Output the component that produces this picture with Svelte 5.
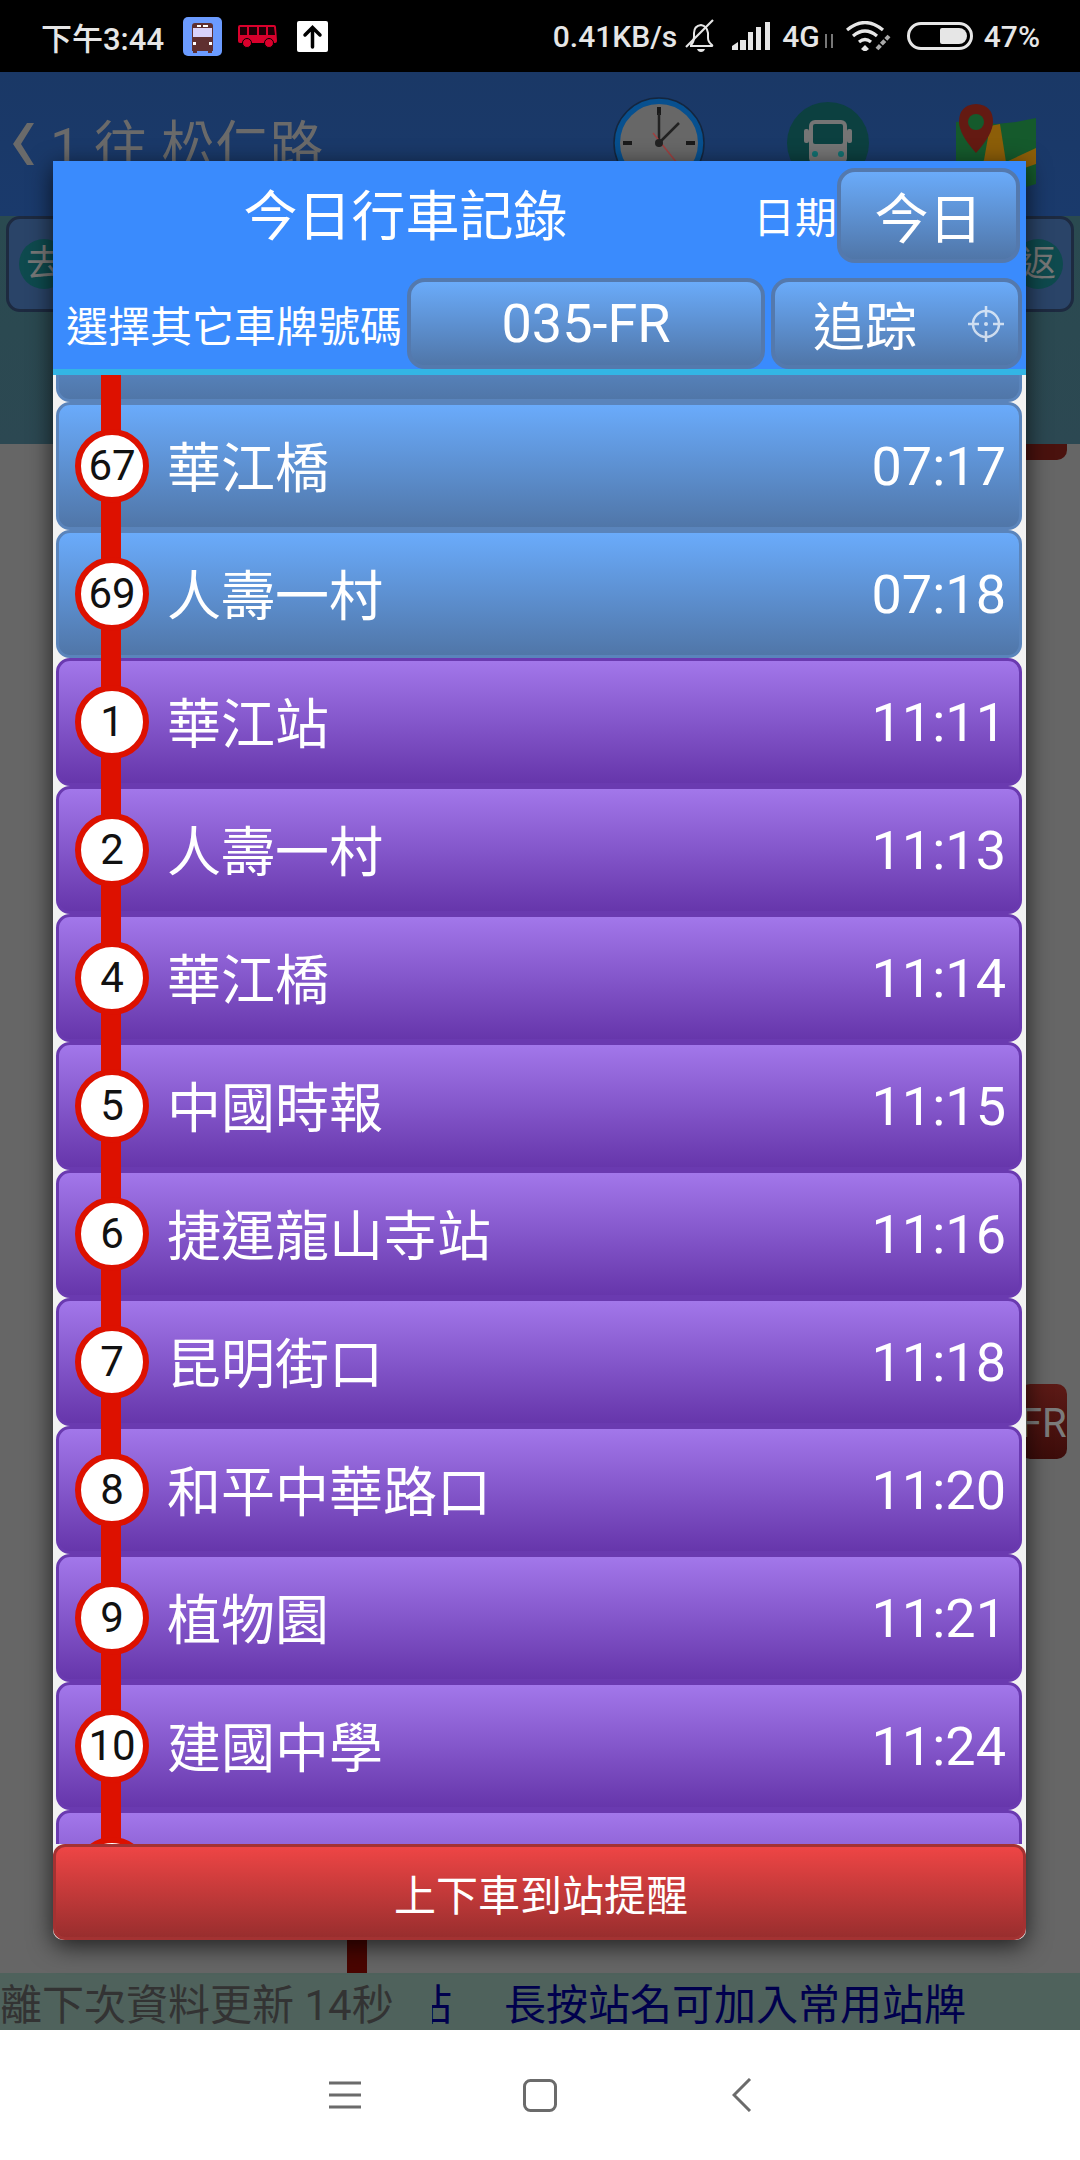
<script>
  const stations = [
    { no: 67, name: '華江橋', time: '07:17', kind: 'blue' },
    { no: 69, name: '人壽一村', time: '07:18', kind: 'blue' },
    { no: 1, name: '華江站', time: '11:11', kind: 'purple' },
    { no: 2, name: '人壽一村', time: '11:13', kind: 'purple' },
    { no: 4, name: '華江橋', time: '11:14', kind: 'purple' },
    { no: 5, name: '中國時報', time: '11:15', kind: 'purple' },
    { no: 6, name: '捷運龍山寺站', time: '11:16', kind: 'purple' },
    { no: 7, name: '昆明街口', time: '11:18', kind: 'purple' },
    { no: 8, name: '和平中華路口', time: '11:20', kind: 'purple' },
    { no: 9, name: '植物園', time: '11:21', kind: 'purple' },
    { no: 10, name: '建國中學', time: '11:24', kind: 'purple' }
  ];
</script>

<div class="screen">
  <header class="status">
    <div class="status-left">
      <span class="clock-text">下午3:44</span>
      <svg class="app-icon" width="39" height="39" viewBox="0 0 39 39">
        <rect width="39" height="39" rx="5" fill="#6b9bff" />
        <path d="M9 9q0-3 3-3h15q3 0 3 3v25H9z" fill="#5f2f30" />
        <path d="M10 11h19v9H10z" fill="#d8d2fb" />
        <rect x="14" y="8" width="4" height="2" fill="#fff" />
        <rect x="20" y="8" width="5" height="2" fill="#fff" />
        <rect x="10" y="25" width="3" height="3" fill="#fff" />
        <rect x="26" y="25" width="3" height="3" fill="#fff" />
        <rect x="10" y="33" width="4" height="3" fill="#5f2f30" />
        <rect x="25" y="33" width="4" height="3" fill="#5f2f30" />
      </svg>
      <svg class="red-bus" width="39" height="23" viewBox="0 0 39 23">
        <path d="M2 0h34q2 0 2 2l1 14q0 2-2 2H2q-2 0-2-2V2q0-2 2-2z" fill="#d9002c" />
        <path d="M2 2h7v8H2zM11 2h8v8h-8zM21 2h7v8h-7zM30 2h6l1 8h-7z" fill="#1a0006" />
        <circle cx="9" cy="18" r="4.500" fill="#d9002c" stroke="#000" stroke-width="1" />
        <circle cx="31" cy="18" r="4.500" fill="#d9002c" stroke="#000" stroke-width="1" />
      </svg>
      <svg class="up-icon" width="31" height="31" viewBox="0 0 31 31">
        <rect width="31" height="31" rx="2" fill="#fff" />
        <path d="M15.500 26V7M8 14l7.500-7.500L23 14" fill="none" stroke="#000" stroke-width="3.500" stroke-linecap="round" />
      </svg>
    </div>
    <div class="status-right">
      <span class="speed">0.41KB/s</span>
      <svg class="bell" width="32" height="34" viewBox="0 0 32 34">
        <path d="M6 26q3-3 3-8v-4q0-7 7-8 6 1 7 8v5q0 4 4 7 1 1-1 1H6z" fill="none" stroke="#e6e6e6" stroke-width="2" />
        <path d="M1 28L28 1" stroke="#e6e6e6" stroke-width="2.200" />
        <path d="M12 30h8q-1 3-4 3t-4-3z" fill="#e6e6e6" />
      </svg>
      <svg class="signal" width="38" height="28" viewBox="0 0 38 28">
        <path d="M0 24l6-4v8H0zM8 18h6v10H8zM16 10h5v18h-5zM24 5h5v23h-5zM33 0h5v28h-5z" fill="#e6e6e6" />
      </svg>
      <span class="net">4G</span>
      <svg class="updown" width="12" height="14" viewBox="0 0 12 14">
        <path d="M3 0v14M9 0v14" stroke="#777" stroke-width="2" />
      </svg>
      <svg class="wifi" width="46" height="30" viewBox="0 0 46 30">
        <path d="M1 9q18-15 36 0M7 15q12-10 24 0M13 21q6-5 12 0" fill="none" stroke="#e6e6e6" stroke-width="3.200" />
        <path d="M19 24l4 4-4 3-4-3z" fill="#e6e6e6" />
        <path d="M31 28l12-13" stroke="#aaa" stroke-width="4" stroke-dasharray="5 1.500" />
      </svg>
      <span class="battery"><i></i></span>
      <span class="percent">47%</span>
    </div>
  </header>

  <!-- dimmed page behind the dialog -->
  <section class="appbar">
    <svg class="chevron" width="21" height="42" viewBox="0 0 21 42"><path d="M21 0h-7L0 21l14 21h7L8 21z" fill="#6a6a6a" /></svg>
    <span class="back-title">1 往 松仁路</span>
    <svg class="clock" width="92" height="92" viewBox="0 0 92 92">
      <circle cx="46" cy="46" r="42" fill="#676767" stroke="#07508f" stroke-width="6" />
      <circle cx="46" cy="46" r="45" fill="none" stroke="#14263f" stroke-width="1.500" />
      <path d="M46 10v8M46 74v8M10 46h9M73 46h9" stroke="#1a1a1a" stroke-width="4" />
      <path d="M46 16v30M46 46l20-20" stroke="#222" stroke-width="2.500" />
      <path d="M40 36l24 30" stroke="#a04040" stroke-width="1.500" />
      <circle cx="46" cy="46" r="4" fill="#222" />
    </svg>
    <svg class="busround" width="82" height="82" viewBox="0 0 82 82">
      <circle cx="41" cy="41" r="41" fill="#0c4040" />
      <rect x="22" y="18" width="38" height="44" rx="6" fill="#757575" />
      <rect x="26" y="22" width="30" height="20" rx="2" fill="#0c4040" />
      <rect x="17" y="27" width="5" height="14" rx="2" fill="#757575" />
      <rect x="60" y="27" width="5" height="14" rx="2" fill="#757575" />
      <circle cx="28" cy="52" r="3" fill="#117070" />
      <circle cx="54" cy="52" r="3" fill="#117070" />
    </svg>
    <svg class="map" width="80" height="88" viewBox="0 0 80 88">
      <path d="M0 18l20-2 20 4 20-2 20-4v66l-20 6-20-6-20 6-20-2z" fill="#155a2c" />
      <path d="M34 22l10-2 6 38 30-14v16L12 84l16-28z" fill="#8c5e08" />
      <path d="M20 0q-17 1-17 18 0 12 17 31 17-19 17-31 0-17-17-18z" fill="#641a12" />
      <circle cx="20" cy="18" r="8" fill="#155a2c" />
    </svg>
  </section>
  <section class="tabs">
    <div class="tab"><span class="badge">去</span></div>
    <div class="tab"><span class="badge">返</span></div>
  </section>
  <main class="routepane">
    <div class="tag top"></div>
    <div class="tag plate">FR</div>
    <div class="stub"></div>
  </main>
  <div class="ticker">
    <span class="countdown">離下次資料更新 14秒</span>
    <div class="marquee"><span class="hint tail">站</span><span class="hint">長按站名可加入常用站牌</span></div>
  </div>
  <nav class="navbar">
    <svg width="32" height="28" viewBox="0 0 32 28"><path d="M0 2h32M0 14h32M0 26h32" stroke="#6b6b6b" stroke-width="3" /></svg>
    <svg width="34" height="33" viewBox="0 0 34 33"><rect x="1.500" y="1.500" width="31" height="30" rx="6" fill="none" stroke="#6b6b6b" stroke-width="3" /></svg>
    <svg width="20" height="34" viewBox="0 0 20 34"><path d="M18 1L2 17l16 16" fill="none" stroke="#6b6b6b" stroke-width="3" /></svg>
  </nav>

  <div class="dialog">
    <div class="dlg-head">
      <div class="head-row first">
        <h1>今日行車記錄</h1>
        <span class="date-label">日期</span>
        <button class="btn today">今日</button>
      </div>
      <div class="head-row second">
        <span class="plate-label">選擇其它車牌號碼</span>
        <button class="btn plate-btn">035-FR</button>
        <button class="btn track">
          <span>追踪</span>
          <svg width="38" height="38" viewBox="0 0 38 38">
            <circle cx="19" cy="19" r="13" fill="none" stroke="#fff" stroke-width="2.500" />
            <circle cx="19" cy="19" r="2" fill="#fff" />
            <path d="M19 1v11M19 26v11M1 19h11M26 19h11" stroke="#fff" stroke-width="2.500" />
          </svg>
        </button>
      </div>
    </div>
    <div class="list">
      <div class="rail"></div>
      <div class="row blue spill"></div>
      {#each stations as s (s.no + s.time)}
        <div class="row {s.kind}">
          <span class="stop">{s.no}</span>
          <span class="name">{s.name}</span>
          <span class="time">{s.time}</span>
        </div>
      {/each}
      <div class="row purple">
        <span class="stop"></span>
      </div>
    </div>
    <button class="remind">上下車到站提醒</button>
  </div>
</div>

<style>
:global(body) {
  margin: 0;
  background: #fff;
}
.screen {
  position: relative;
  width: 1080px;
  height: 2160px;
  overflow: hidden;
  display: flex;
  flex-direction: column;
  font-family: Roboto, "Noto Sans CJK TC", sans-serif;
}
button {
  font-family: inherit;
  margin: 0;
}

.status {
  height: 72px;
  flex: none;
  background: #000;
  color: #e6e6e6;
  display: flex;
  justify-content: space-between;
  align-items: center;
  padding: 0 40px 0 41px;
  box-sizing: border-box;
  font-weight: 500;
}
.status-left, .status-right {
  display: flex;
  align-items: center;
}
.clock-text {
  font-size: 31px;
  width: 142px;
  white-space: nowrap;
}
.red-bus { margin-left: 16px; }
.up-icon { margin-left: 20px; }
.speed { font-size: 30px; }
.bell { margin-left: 8px; }
.signal { margin-left: 15px; }
.net { font-size: 30px; margin-left: 12px; }
.updown { margin-left: 3px; margin-top: 10px; }
.wifi { margin-left: 11px; }
.battery {
  margin-left: 15px;
  width: 66px;
  height: 28px;
  box-sizing: border-box;
  border: 3px solid #e6e6e6;
  border-radius: 14px;
  display: flex;
  justify-content: flex-end;
  padding: 3px;
}
.battery i {
  width: 27px;
  background: #e6e6e6;
  border-radius: 2px 8px 8px 2px;
}
.percent { font-size: 30px; margin-left: 11px; }

.appbar {
  height: 144px;
  flex: none;
  background: linear-gradient(#1a3866, #1a3a6c);
  display: flex;
  align-items: flex-start;
}
.chevron {
  margin: 51px 0 0 13px;
}
.back-title {
  color: #6a6a6a;
  font-size: 54px;
  line-height: 60px;
  margin: 46px 0 0 16px;
  width: 563px;
  white-space: nowrap;
}
.clock { margin-top: 25px; }
.busround { margin: 30px 0 0 82px; }
.map { margin: 32px 0 0 87px; }

.tabs {
  height: 228px;
  flex: none;
  box-sizing: border-box;
  background: linear-gradient(#2a4a50, #2c4852);
  display: flex;
  justify-content: space-between;
  padding: 0 6px;
}
.tab {
  width: 100px;
  height: 96px;
  box-sizing: border-box;
  border: 3px solid #1d2a40;
  border-radius: 14px;
  background: #2a4468;
  display: flex;
  align-items: center;
  padding: 0 8px 0 10px;
}
.tab:last-child { justify-content: flex-end; }
.badge {
  width: 50px;
  height: 50px;
  flex: none;
  border-radius: 50%;
  background: #0e4a4e;
  color: #777;
  font-size: 36px;
  line-height: 50px;
  text-align: center;
}

.routepane {
  flex: 1;
  background: #666;
  position: relative;
}
.tag {
  position: absolute;
  left: 1020px;
  width: 47px;
  background: linear-gradient(#5c1a16, #3c0c0a);
  border-radius: 0 0 10px 0;
}
.tag.top {
  top: 0;
  height: 16px;
  background: #4a120e;
}
.tag.plate {
  top: 940px;
  height: 75px;
  border-radius: 10px;
  color: #7b7b7b;
  font-size: 40px;
  line-height: 80px;
  white-space: nowrap;
  overflow: hidden;
}
.stub {
  position: absolute;
  left: 347px;
  bottom: 0;
  width: 20px;
  height: 100px;
  background: #4a0500;
}

.ticker {
  height: 57px;
  flex: none;
  background: #4f625c;
  display: flex;
  align-items: center;
  font-size: 42px;
  white-space: nowrap;
}
.countdown {
  color: #333;
  width: 432px;
  flex: none;
}
.marquee {
  flex: 1;
  overflow: hidden;
  display: flex;
  color: #00004d;
}
.hint.tail {
  margin-left: -22px;
  margin-right: 52px;
}
.navbar {
  height: 130px;
  flex: none;
  background: #fff;
  display: flex;
  align-items: center;
  justify-content: center;
}
.navbar svg:nth-child(1) { margin-right: 162px; }
.navbar svg:nth-child(2) { margin-right: 175px; }

.dialog {
  position: absolute;
  left: 53px;
  top: 161px;
  width: 973px;
  height: 1779px;
  display: flex;
  flex-direction: column;
  background: #f2f2f2;
  border-radius: 0 0 10px 10px;
  box-shadow: 0 6px 24px rgba(0, 0, 0, 0.7);
}
.dlg-head {
  flex: none;
  height: 214px;
  box-sizing: border-box;
  background: #3a8bfd;
  border-bottom: 6px solid #33b5e5;
  color: #fff;
}
.head-row {
  display: flex;
  align-items: center;
}
.head-row.first {
  height: 117px;
  padding-right: 6px;
}
.head-row.first h1 {
  flex: 1;
  margin: -14px 0 0;
  padding-left: 5px;
  text-align: center;
  font-size: 54px;
  font-weight: 400;
}
.date-label {
  font-size: 42px;
  width: 84px;
  flex: none;
  margin-top: -10px;
}
.btn {
  flex: none;
  box-sizing: border-box;
  border: 4px solid #5479ad;
  border-radius: 18px;
  background: linear-gradient(#6aabfa, #5076a8);
  color: #fff;
  padding: 0;
}
.btn.today {
  width: 183px;
  height: 95px;
  font-size: 54px;
  margin-top: -8px;
}
.head-row.second {
  height: 91px;
  padding-left: 13px;
}
.plate-label {
  width: 341px;
  flex: none;
  font-size: 42px;
  white-space: nowrap;
}
.btn.plate-btn {
  width: 358px;
  height: 91px;
  font-size: 54px;
}
.btn.track {
  width: 251px;
  height: 91px;
  margin-left: 6px;
  font-size: 52px;
  display: flex;
  align-items: center;
  justify-content: space-between;
  padding: 0 13px 0 38px;
}
.btn.track svg { opacity: 0.7; }

.list {
  flex: 1;
  min-height: 0;
  overflow: hidden;
  position: relative;
  padding: 0 4px 0 3px;
}
.rail {
  position: absolute;
  left: 48px;
  top: 0;
  bottom: 0;
  width: 20px;
  background: #dd1100;
  z-index: 1;
}
.row {
  height: 128px;
  box-sizing: border-box;
  border: 3px solid;
  border-radius: 14px;
  display: flex;
  align-items: center;
  padding: 0 13px 0 16px;
  color: #fff;
}
.row.spill { margin-top: -101px; }
.row.blue {
  border-color: #5a84bb;
  background: linear-gradient(#6aabfb, #5076a8);
}
.row.purple {
  border-color: #6a3ab0;
  background: linear-gradient(#a277ea, #6636ab);
}
.stop {
  position: relative;
  z-index: 2;
  flex: none;
  width: 74px;
  height: 74px;
  box-sizing: border-box;
  border: 6px solid #dd1100;
  border-radius: 50%;
  background: #fff;
  color: #111;
  font-size: 42px;
  line-height: 62px;
  text-align: center;
  margin-top: -1px;
}
.name {
  flex: 1;
  margin: -4px 0 0 18px;
  font-size: 54px;
  white-space: nowrap;
}
.time {
  font-size: 54px;
}
.remind {
  flex: none;
  height: 96px;
  box-sizing: border-box;
  border: 3px solid #a33232;
  border-radius: 12px;
  background: linear-gradient(#ee4545, #992e2e);
  color: #fff;
  font-size: 42px;
  padding: 0 0 0 3px;
  position: relative;
  z-index: 3;
}
</style>
